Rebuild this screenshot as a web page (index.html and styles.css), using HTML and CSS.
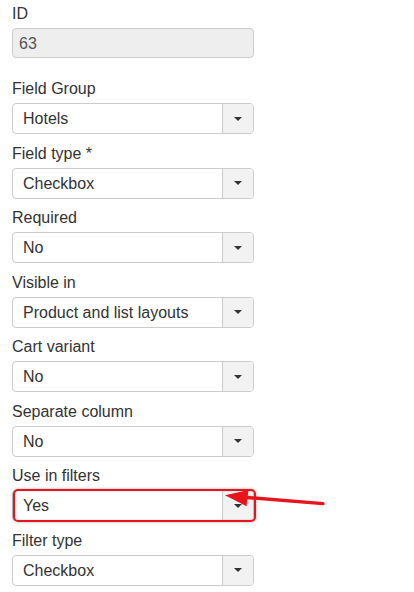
FILE: index.html
```html
<!DOCTYPE html>
<html>
<head>
<meta charset="utf-8">
<link rel="stylesheet" href="styles.css">
</head>
<body>
<div class="form">
  <div class="group group-id">
    <label class="label">ID</label>
    <div class="input-readonly">63</div>
  </div>
  <div class="group">
    <label class="label">Field Group</label>
    <div class="select"><span class="value">Hotels</span><span class="btn"><i class="caret"></i></span></div>
  </div>
  <div class="group">
    <label class="label">Field type *</label>
    <div class="select"><span class="value">Checkbox</span><span class="btn"><i class="caret"></i></span></div>
  </div>
  <div class="group">
    <label class="label">Required</label>
    <div class="select"><span class="value">No</span><span class="btn"><i class="caret"></i></span></div>
  </div>
  <div class="group">
    <label class="label">Visible in</label>
    <div class="select"><span class="value">Product and list layouts</span><span class="btn"><i class="caret"></i></span></div>
  </div>
  <div class="group">
    <label class="label">Cart variant</label>
    <div class="select"><span class="value">No</span><span class="btn"><i class="caret"></i></span></div>
  </div>
  <div class="group">
    <label class="label">Separate column</label>
    <div class="select"><span class="value">No</span><span class="btn"><i class="caret"></i></span></div>
  </div>
  <div class="group">
    <label class="label">Use in filters</label>
    <div class="select highlighted"><span class="value">Yes</span><span class="btn"><i class="caret"></i></span><span class="highlight"></span></div>
  </div>
  <div class="group">
    <label class="label">Filter type</label>
    <div class="select"><span class="value">Checkbox</span><span class="btn"><i class="caret"></i></span></div>
  </div>
</div>
<svg class="arrow" width="414" height="592" viewBox="0 0 414 592">
  <line x1="323" y1="503.6" x2="244" y2="497.2" stroke="#e8141c" stroke-width="3.4" stroke-linecap="round"/>
  <polygon points="225,495.3 248.5,490 246.5,506.2" fill="#e8141c"/>
</svg>
</body>
</html>
```
FILE: styles.css
```css
html, body {
  margin: 0;
  padding: 0;
  background: #fff;
}
body {
  position: relative;
  width: 414px;
  height: 592px;
  overflow: hidden;
  font-family: "Liberation Sans", Arial, sans-serif;
  font-size: 16px;
  color: #333;
}
.form {
  padding: 2.5px 0 0 12px;
  width: 241.5px;
}
.group {
  margin-bottom: 8.57px;
}
.group-id {
  margin-bottom: 20px;
}
.label {
  display: block;
  line-height: 22px;
  margin-bottom: 3px;
  color: #333;
}
.group-id .label {
  margin-bottom: 3.5px;
}
.input-readonly {
  box-sizing: border-box;
  height: 30px;
  line-height: 29px;
  padding-left: 6px;
  border: 1px solid #ccc;
  border-radius: 4px;
  background: #eee;
  color: #555;
}
.select {
  position: relative;
  box-sizing: border-box;
  height: 31px;
  display: flex;
  border: 1px solid #ccc;
  border-radius: 4px;
  background: #fff;
}
.value {
  flex: 1;
  padding-left: 10px;
  line-height: 29px;
  color: #333;
}
.btn {
  width: 30px;
  display: flex;
  align-items: center;
  justify-content: center;
  border-left: 1px solid #ccc;
  background: #f2f2f2;
  border-radius: 0 3px 3px 0;
}
.caret {
  display: block;
  width: 0;
  height: 0;
  border-top: 4px solid #333;
  border-left: 4px solid transparent;
  border-right: 4px solid transparent;
}
.highlight {
  position: absolute;
  top: -2px;
  left: 0;
  right: -3px;
  bottom: -2px;
  border: 2px solid #e8141c;
  border-radius: 5px;
  box-shadow: 0 0 3px rgba(0, 0, 0, 0.35), inset 0 0 2px rgba(0, 0, 0, 0.2);
  pointer-events: none;
}
.arrow {
  position: absolute;
  top: 0;
  left: 0;
  pointer-events: none;
}
```
